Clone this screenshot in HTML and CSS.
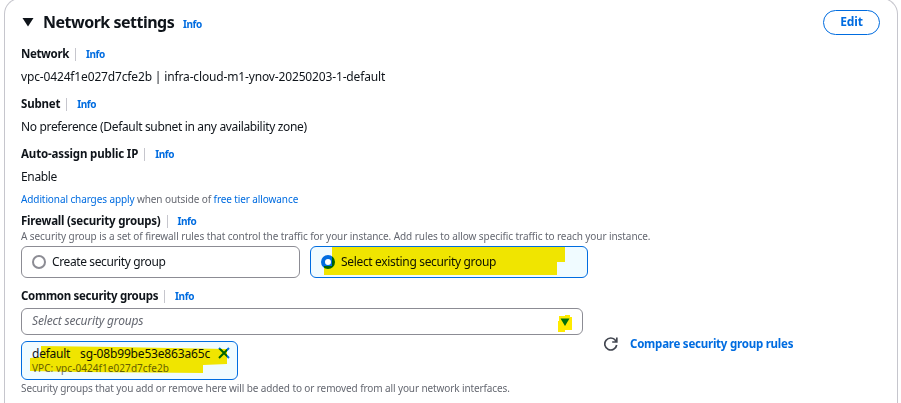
FILE: index.html
```html
<!DOCTYPE html>
<html lang="en">
<head>
<meta charset="utf-8">
<title>Network settings</title>
<link rel="stylesheet" href="styles.css">
</head>
<body>
<main class="card">
  <header class="header">
    <svg class="caret" width="12" height="10" viewBox="0 0 12 10"><path d="M.5 1h11L6 9.500z" fill="#0f141a"/></svg>
    <h2 class="title">Network settings</h2>
    <a class="info">Info</a>
    <button class="edit">Edit</button>
  </header>

  <div class="label"><b class="t-network">Network</b><i class="rule"></i><a class="info">Info</a></div>
  <div class="value"><span class="t-vpc">vpc-0424f1e027d7cfe2b | infra-cloud-m1-ynov-20250203-1-default</span></div>
  <div class="label"><b class="t-subnet">Subnet</b><i class="rule"></i><a class="info">Info</a></div>
  <div class="value"><span class="t-pref">No preference (Default subnet in any availability zone)</span></div>
  <div class="label"><b class="t-auto">Auto-assign public IP</b><i class="rule"></i><a class="info">Info</a></div>
  <div class="value"><span class="t-enable">Enable</span></div>
  <div class="charges"><a>Additional charges apply</a> when outside of <a>free tier allowance</a></div>

  <div class="label firewall"><b class="t-firewall">Firewall (security groups)</b><i class="rule"></i><a class="info">Info</a></div>
  <div class="hint t-rules">A security group is a set of firewall rules that control the traffic for your instance. Add rules to allow specific traffic to reach your instance.</div>
  <div class="tiles">
    <div class="tile"><span class="radio"></span><span class="t-create">Create security group</span></div>
    <div class="tile selected"><span class="radio"></span><span class="t-select">Select existing security group</span>
      <svg class="marker" width="278" height="32" viewBox="0 0 278 32"><path d="M22 1H255V16H247V29H14V20H22z" fill="#ffe900"/></svg>
    </div>
  </div>

  <div class="label common"><b class="t-common">Common security groups</b><i class="rule"></i><a class="info">Info</a></div>
  <div class="select-row">
    <div class="select-column">
      <div class="select"><em class="t-placeholder">Select security groups</em>
        <svg class="marker-caret" width="16" height="22" viewBox="0 0 16 22"><path d="M2 3h6V2h5v2h2v13H8v2H1V8h1z" fill="#ffeb00"/><path d="M3.500 5.500h9L8 13z" fill="#00700b"/></svg>
      </div>
      <div class="token">
        <div class="token-name"><span class="t-default">default</span><span class="t-sg">sg-08b99be53e863a65c</span></div>
        <div class="token-vpc">VPC: vpc-0424f1e027d7cfe2b</div>
        <svg class="close" width="12" height="12" viewBox="0 0 12 12"><path d="M1 1l10 10M11 1L1 11" stroke="#006ce0" stroke-width="2"/></svg>
        <svg class="marker" width="217" height="39" viewBox="0 0 217 39"><path d="M20 5L95 6L206 8V23L182 24V32L60 31L9 30V17L20 16z" fill="#ffe900"/></svg>
      </div>
      <div class="hint t-added">Security groups that you add or remove here will be added to or removed from all your network interfaces.</div>
    </div>
    <div class="compare">
      <svg width="14" height="14" viewBox="0 0 14 14" fill="none" stroke="#424650" stroke-width="1.7"><path d="M12.7 8A6 6 0 1 1 11.6 3.4L12.7 4.8M12.8 .5V5H8.2"/></svg>
      <a class="t-compare">Compare security group rules</a>
    </div>
  </div>
</main>
</body>
</html>
```
FILE: styles.css
```css
* { box-sizing: border-box; }
body {
  margin: 0;
  height: 403px;
  overflow: hidden;
  background: #fff;
  color: #0f141a;
  font: 12px/16px "Noto Sans", sans-serif;
}
.card {
  width: 894px;
  height: 405px;
  margin: -2px 0 0 4px;
  padding: 2px 17px 0 16px;
  border: 1px solid #c6c6cd;
  border-bottom: 0;
  border-radius: 16px 16px 0 0;
}
a { color: #006ce0; }
.header { display: flex; align-items: center; height: 42px; margin-bottom: 1px; }
.caret { margin-left: 1px; }
.title { margin: 0 0 0 9px; width: 131px; font-size: 16px; line-height: 24px; letter-spacing: -0.5px; white-space: nowrap; }
.header .info { margin: 4px 0 0 9px; }
.info { font-size: 10px; font-weight: 700; letter-spacing: -0.4px; }
.edit {
  margin-left: auto;
  width: 57px;
  height: 25px;
  padding: 0;
  border: 1.5px solid #006ce0;
  border-radius: 13px;
  background: #fff;
  color: #006ce0;
  font: bold 12px/20px "Noto Sans", sans-serif;
  letter-spacing: -0.2px;
}
.label { display: flex; align-items: center; height: 20px; white-space: nowrap; font-size: 11.5px; }
.rule { width: 1px; height: 13px; margin: 0 10px 0 6px; background: #c6c6cd; }
.value { height: 20px; margin: 3px 0 7px; line-height: 20px; white-space: nowrap; }
.charges { height: 16px; margin-top: -3px; font-size: 10px; color: #656871; white-space: nowrap; letter-spacing: -0.1px; }
.firewall { height: 16px; margin-top: 6px; }
.hint { height: 14px; font-size: 10px; line-height: 14px; color: #656871; white-space: nowrap; }
.tiles { display: flex; gap: 10px; margin-top: 3px; }
.tile {
  position: relative;
  display: flex;
  align-items: center;
  gap: 6px;
  width: 279px;
  height: 32px;
  padding-left: 10px;
  border: 1.5px solid #8c8c94;
  border-radius: 6px;
}
.selected { width: 278px; background: #f0fbff; border-color: #006ce0; }
.radio { width: 14px; height: 14px; border: 2px solid #8c8c94; border-radius: 50%; background: #fff; }
.selected .radio { border: 4px solid #006ce0; }
.marker { position: absolute; left: -1px; top: -1px; mix-blend-mode: multiply; pointer-events: none; }
.common { height: 16px; margin-top: 10px; }
.select-row { display: flex; margin-top: 4px; }
.select-column { width: 562px; }
.select {
  position: relative;
  height: 27px;
  padding-left: 10px;
  border: 1.5px solid #8c8c94;
  border-radius: 6px;
  color: #656871;
  line-height: 24px;
}
.marker-caret { position: absolute; right: 9px; top: 4px; }
.token {
  position: relative;
  width: 217px;
  height: 39px;
  margin: 6px 0 1px;
  padding: 4px 0 0 10px;
  border: 1.5px solid #006ce0;
  border-radius: 6px;
  background: #f0fbff;
  white-space: nowrap;
}
.token-name { display: flex; gap: 10px; line-height: 16px; }
.token-vpc { font-size: 10px; line-height: 13px; color: #656871; letter-spacing: 0.06px; }
.close { position: absolute; right: 7px; top: 5px; }
.compare { display: flex; align-items: center; gap: 12px; height: 20px; margin: 26px 0 0 21px; font-size: 11.5px; font-weight: bold; white-space: nowrap; }

/* Tracking per string */
.t-network { letter-spacing: -0.37px; }
.t-subnet { letter-spacing: -0.2px; }
.t-auto { letter-spacing: -0.15px; }
.t-firewall { letter-spacing: -0.2px; }
.t-common { letter-spacing: -0.3px; }
.t-vpc { letter-spacing: -0.15px; }
.t-pref { letter-spacing: -0.34px; }
.t-enable { letter-spacing: -0.35px; }
.t-rules { letter-spacing: -0.075px; }
.t-create { letter-spacing: -0.38px; }
.t-select { letter-spacing: -0.33px; }
.t-placeholder { letter-spacing: -0.17px; }
.t-default { letter-spacing: -0.25px; }
.t-sg { letter-spacing: -0.17px; }
.t-added { letter-spacing: -0.11px; }
.t-compare { letter-spacing: -0.23px; }
```
